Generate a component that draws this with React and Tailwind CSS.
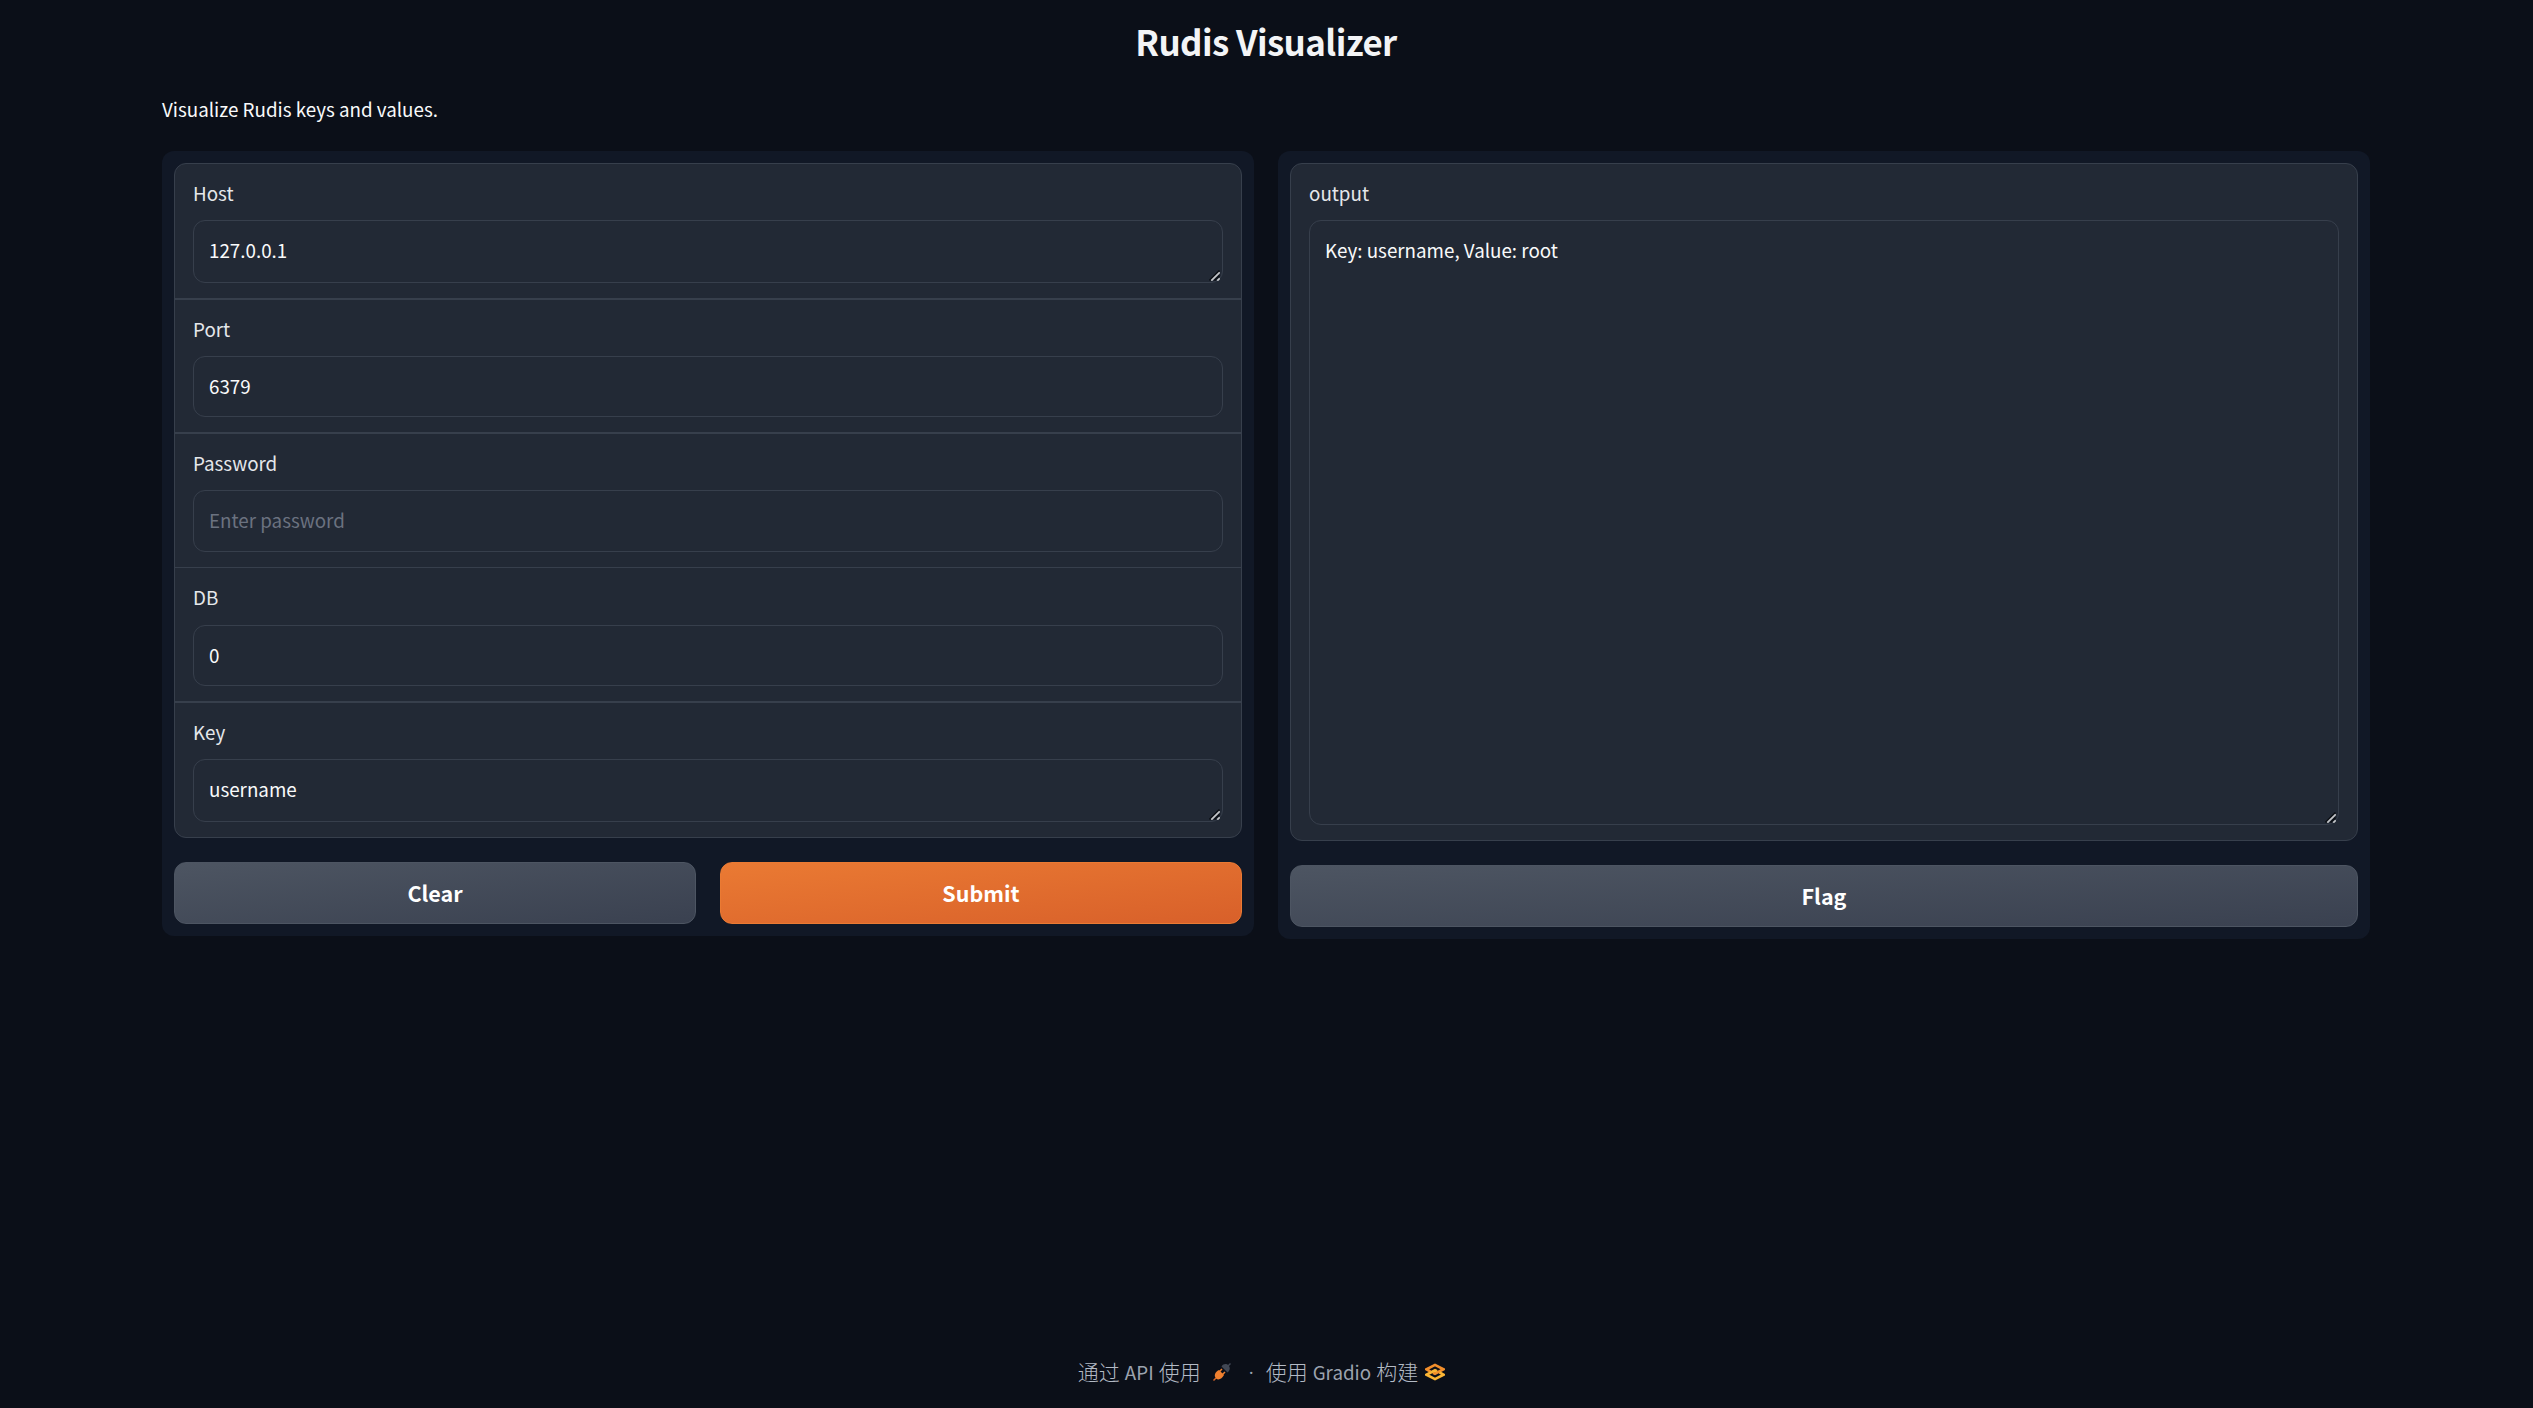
const border = "border-[#373f4c]";

function Grip() {
  return (
    <svg className="absolute right-[2px] bottom-[1px] size-[11px]" viewBox="0 0 11 11" aria-hidden="true">
      <path d="M0.500 10.500 L10.500 0.500 M5.500 10.500 L10.500 5.500" stroke="#0b0e14" strokeWidth="1.6" fill="none" />
      <path d="M2.300 10.700 L10.700 2.300 M8.300 10.700 L10.700 8.300" stroke="#c4c6c9" strokeWidth="1.7" fill="none" />
    </svg>
  );
}

function Field({ label, value, placeholder, grip, rowClass, boxClass, labelClass = "h-[42px]" }) {
  return (
    <div className={`${rowClass} px-[18px] pt-[14px] ${border}`}>
      <div className={`${labelClass} text-[18.8px] leading-[30px] text-[#e5e7eb]`}>{label}</div>
      <div className={`${boxClass} relative rounded-[12px] border ${border} px-[15px] pt-[14px] text-[18.8px] leading-[30px]`}>
        {value ? <span className="text-[#f9fafb]">{value}</span> : <span className="text-[#6b7280]">{placeholder}</span>}
        {grip && <Grip />}
      </div>
    </div>
  );
}

function Button({ children, primary }) {
  return (
    <button
      className={`h-[62px] flex-1 rounded-[12px] border bg-linear-to-br text-[21.5px] font-bold text-white ${
        primary ? "border-[#ea7a33] from-[#ea7a33] to-[#d8602a]" : "border-[#4d5562] from-[#4d5562] to-[#3a4150]"
      }`}
    >
      {children}
    </button>
  );
}

function Plug() {
  return (
    <svg className="size-[18px]" viewBox="0 0 18 18" aria-hidden="true">
      <path d="M0.500 17.500 L3 15" stroke="#d9682b" strokeWidth="1.4" />
      <path d="M3 15.500 C0.500 12.500 2 9 6 7 L11 12 C9 16 5.500 17.500 3 15.500Z" fill="#f0802f" />
      <path d="M6.500 8.500 L9 6 M9.500 11.500 L12 9" stroke="#f0802f" strokeWidth="1.5" />
      <path d="M8.500 3.500 C10.500 0.500 13.500 0.500 15.500 2.500 C17.500 4.500 17 7.500 14.500 9.500Z" fill="#414754" />
      <path d="M15 3 L17.500 0.500" stroke="#414754" strokeWidth="1.4" />
    </svg>
  );
}

function GradioLogo() {
  return (
    <svg className="h-[18px] w-[20px]" viewBox="0 0 20 18" fill="none" strokeWidth="2.7" aria-hidden="true">
      <path d="M5.500 8.600 L1.500 6.300 L10 1.900 L18.500 6.300 L10 10.800 L8 9.800" stroke="#f28e2b" />
      <path d="M14.500 9.400 L18.500 11.700 L10 16.100 L1.500 11.700 L10 7.200 L12 8.200" stroke="#fbb534" />
    </svg>
  );
}

export default function App() {
  return (
    <div className="flex h-[1408px] flex-col bg-[#0b0f18] pr-[163px] pl-[162px] font-['Noto_Sans_CJK_SC',sans-serif] text-[#f3f4f6]">
      <h1 className="h-[86px] pt-[12px] text-center text-[34.9px] leading-[58px] font-bold tracking-[-0.6px]">Rudis Visualizer</h1>
      <p className="h-[65px] pt-[8px] text-[18.8px] leading-[30px] text-[#f9fafb]">Visualize Rudis keys and values.</p>
      <main className="flex items-start gap-6">
        <section className="flex-1 rounded-[12px] bg-[#111826] p-3">
          <div className={`rounded-[12px] border bg-[#222935] ${border}`}>
            <Field label="Host" value="127.0.0.1" grip rowClass="h-[136px] border-b-2" boxClass="h-[63px]" />
            <Field label="Port" value="6379" rowClass="h-[134px] border-b-2" boxClass="h-[61px]" />
            <Field label="Password" placeholder="Enter password" rowClass="h-[134px] border-b" boxClass="h-[62px]" />
            <Field label="DB" value="0" rowClass="h-[135px] border-b-2" labelClass="h-[43px]" boxClass="h-[61px]" />
            <Field label="Key" value="username" grip rowClass="h-[134px]" boxClass="h-[63px]" />
          </div>
          <div className="mt-6 flex gap-6">
            <Button>Clear</Button>
            <Button primary>Submit</Button>
          </div>
        </section>
        <section className="flex-1 rounded-[12px] bg-[#111826] p-3">
          <div className={`rounded-[12px] border bg-[#222935] ${border}`}>
            <Field label="output" value="Key: username, Value: root" grip rowClass="h-[676px]" boxClass="h-[605px]" />
          </div>
          <div className="mt-6 flex">
            <Button>Flag</Button>
          </div>
        </section>
      </main>
      <footer className="mt-auto mb-[20px] flex h-[32px] items-center justify-center pr-[9px] text-[18.8px] text-[#9ca3af]">
        <span className="flex items-center gap-[5px]">
          <span className="text-[21px] font-light text-[#b3bac5]">通过</span>
          <span>API</span>
          <span className="text-[21px] font-light text-[#b3bac5]">使用</span>
        </span>
        <span className="ml-[12px]"><Plug /></span>
        <span className="w-[35px] pl-[6px] text-center font-['Open_Sans',sans-serif]">·</span>
        <span className="flex items-center gap-[5px]">
          <span className="text-[21px] font-light text-[#b3bac5]">使用</span>
          <span>Gradio</span>
          <span className="text-[21px] font-light text-[#b3bac5]">构建</span>
        </span>
        <span className="ml-[7px]"><GradioLogo /></span>
      </footer>
    </div>
  );
}
